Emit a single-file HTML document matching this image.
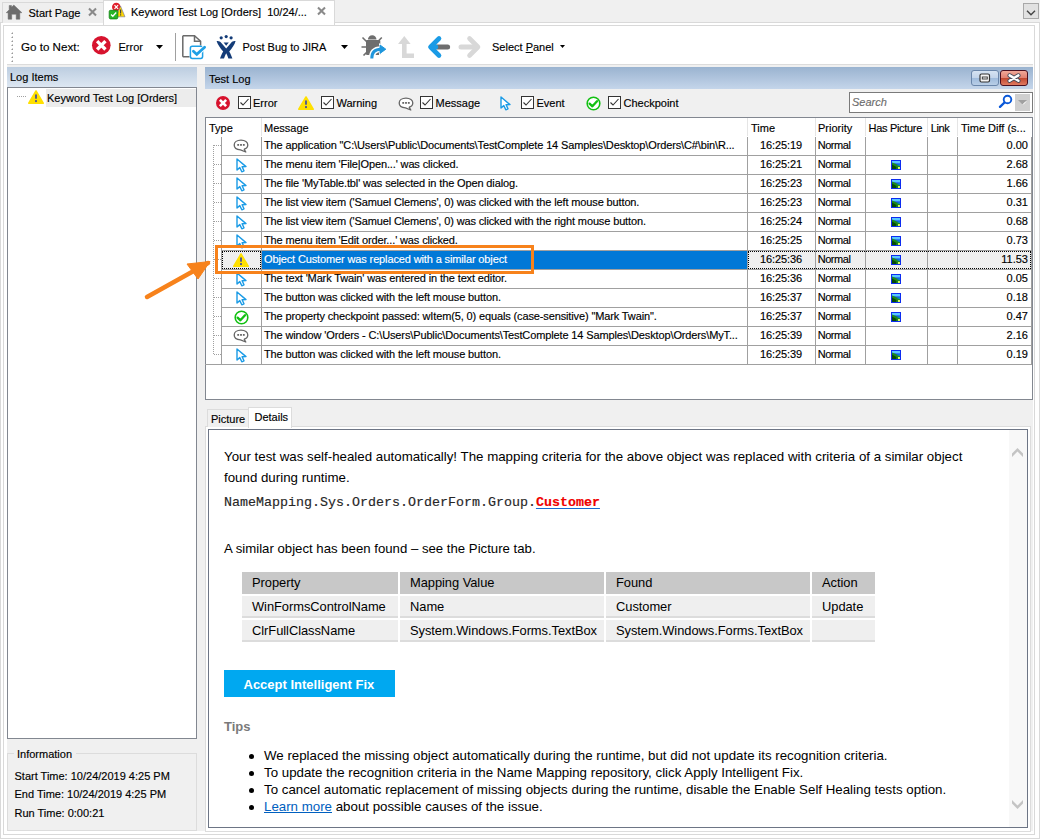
<!DOCTYPE html>
<html><head><meta charset="utf-8">
<style>
*{margin:0;padding:0;box-sizing:border-box}
html,body{width:1040px;height:839px;overflow:hidden;background:#f0f0f0;font-family:"Liberation Sans",sans-serif;font-size:11px;color:#000}
.a{position:absolute}
.t{position:absolute;white-space:nowrap;line-height:1;-webkit-text-stroke:0.15px currentColor}
.d{-webkit-text-stroke:0}
svg{position:absolute;overflow:visible}
.m{font-family:"Liberation Mono",monospace}
</style></head><body>
<div class="a" style="left:0px;top:22px;width:1040px;height:817px;background:#fff;border:1px solid #d9d9d9"></div>
<div class="a" style="left:3px;top:25px;width:1032px;height:810px;background:#fff;border:1px solid #d9d9d9"></div>
<div class="a" style="left:7px;top:65px;width:1026px;height:766px;background:#f0f0f0"></div>
<div class="a" style="left:7px;top:64px;width:1026px;height:1px;background:#dcdcdc"></div>
<div class="a" style="left:2px;top:2px;width:102px;height:21px;background:#efefef;border:1px solid #d9d9d9;border-bottom:none"></div>
<svg style="left:0px;top:0px" width="24" height="24" viewBox="0 0 24 24"><path d="M13.8,5 L21.9,12.7 L19.8,12.7 L19.8,19.2 L16.2,19.2 L16.2,14.2 L11.7,14.2 L11.7,19.2 L8.1,19.2 L8.1,12.7 L6.2,12.7 L9.2,9.8 L9.2,5.5 L11.5,5.5 L11.5,7.3 Z" fill="#6d6d6d" stroke="#6d6d6d" stroke-width="0.5" stroke-linejoin="round"/></svg>
<div class="t" style="left:28.5px;top:7.69px;font-size:11px;">Start Page</div>
<svg style="left:88px;top:8px" width="9" height="8" viewBox="0 0 9 8"><path d="M1,0.5 L8,7.5 M8,0.5 L1,7.5" stroke="#8a8a8a" stroke-width="2.1"/></svg>
<div class="a" style="left:103px;top:0px;width:232px;height:25px;background:#fff;border:1px solid #d9d9d9;border-bottom:none"></div>
<svg style="left:108px;top:2px" width="18" height="18" viewBox="0 0 18 18"><circle cx="8.3" cy="5" r="4.3" fill="#e0202c"/><path d="M6.5,3.2 L10.1,6.8 M10.1,3.2 L6.5,6.8" stroke="#fff" stroke-width="1.2"/><path d="M12.5,4 L17,14.8 L8,14.8 Z" fill="#ffd800" stroke="#7070a0" stroke-width="0.6" stroke-linejoin="round"/><rect x="12" y="7.5" width="1.2" height="4" fill="#444"/><rect x="12" y="12.3" width="1.2" height="1.2" fill="#444"/><rect x="1.2" y="8.3" width="8.6" height="8.6" rx="1.3" fill="#28b428" stroke="#108010" stroke-width="0.8"/><path d="M3,12.5 L4.8,14.3 L8.2,10.5" fill="none" stroke="#fff" stroke-width="1.3"/></svg>
<div class="t" style="left:131px;top:7.19px;font-size:11px;">Keyword Test Log [Orders]&nbsp; 10/24/...</div>
<svg style="left:317px;top:7px" width="9" height="8" viewBox="0 0 9 8"><path d="M1,0.5 L8,7.5 M8,0.5 L1,7.5" stroke="#8a8a8a" stroke-width="2.1"/></svg>
<div class="a" style="left:1023px;top:3px;width:16px;height:16px;background:#e1e1e1;border:1px solid #a8a8a8"></div>
<svg style="left:1026px;top:10px" width="10" height="6" viewBox="0 0 10 6"><path d="M1,0.8 L5,4.8 L9,0.8" fill="none" stroke="#444" stroke-width="1.4"/></svg>
<svg style="left:11px;top:32px" width="3" height="30" viewBox="0 0 3 30"><path d="M0,2 L2,0 L2,2 Z" fill="#9a9a9a"/><rect x="0" y="1" width="1" height="1" fill="#c8c8c8"/><path d="M0,6 L2,4 L2,6 Z" fill="#9a9a9a"/><rect x="0" y="5" width="1" height="1" fill="#c8c8c8"/><path d="M0,10 L2,8 L2,10 Z" fill="#9a9a9a"/><rect x="0" y="9" width="1" height="1" fill="#c8c8c8"/><path d="M0,14 L2,12 L2,14 Z" fill="#9a9a9a"/><rect x="0" y="13" width="1" height="1" fill="#c8c8c8"/><path d="M0,18 L2,16 L2,18 Z" fill="#9a9a9a"/><rect x="0" y="17" width="1" height="1" fill="#c8c8c8"/><path d="M0,22 L2,20 L2,22 Z" fill="#9a9a9a"/><rect x="0" y="21" width="1" height="1" fill="#c8c8c8"/><path d="M0,26 L2,24 L2,26 Z" fill="#9a9a9a"/><rect x="0" y="25" width="1" height="1" fill="#c8c8c8"/><path d="M0,30 L2,28 L2,30 Z" fill="#9a9a9a"/><rect x="0" y="29" width="1" height="1" fill="#c8c8c8"/></svg>
<div class="t" style="left:21px;top:41.18px;font-size:11.6px;">Go to Next:</div>
<svg style="left:90.7px;top:35.2px" width="20.6" height="20.6" viewBox="0 0 20.6 20.6"><circle cx="10.3" cy="10.3" r="9.3" fill="#d7132e"/><path d="M7.324,7.324L13.276000000000002,13.276000000000002M13.276000000000002,7.324L7.324,13.276000000000002" stroke="#fff" stroke-width="3.3480000000000003" stroke-linecap="square"/></svg>
<div class="t" style="left:118.5px;top:41.69px;font-size:11px;">Error</div>
<svg style="left:156px;top:45px" width="7" height="4" viewBox="0 0 7 4"><path d="M0,0 L7,0 L3.5,4 Z" fill="#000"/></svg>
<div class="a" style="left:175px;top:33px;width:1px;height:28px;background:#a0a0a0"></div>
<svg style="left:182px;top:35px" width="24" height="24" viewBox="0 0 24 24"><path d="M0.8,0.8 L12.5,0.8 L18.6,6.3 L18.6,10.5 M7.5,21.7 L0.8,21.7 Z M0.8,0.8 L0.8,21.7" fill="none" stroke="#6a6a6a" stroke-width="1.5"/><path d="M12.5,0.8 L12.5,6.3 L18.6,6.3" fill="none" stroke="#6a6a6a" stroke-width="1.5"/><rect x="8.4" y="11.2" width="12.2" height="12.2" rx="1.8" fill="#fff" stroke="#1ea0e6" stroke-width="1.5"/><path d="M11.4,16.2 L14.8,19.4 L22.6,12.3" fill="none" stroke="#fff" stroke-width="4.5"/><path d="M11.4,16.2 L14.8,19.4 L22.6,12.3" fill="none" stroke="#1ea0e6" stroke-width="2.8" stroke-linecap="round"/></svg>
<svg style="left:216px;top:35px" width="20" height="24" viewBox="0 0 20 24"><circle cx="5.2" cy="2.8" r="1.6" fill="#143c78"/><circle cx="10.2" cy="1.6" r="1.6" fill="#143c78"/><circle cx="15.1" cy="2.8" r="1.6" fill="#143c78"/><path d="M0.6,6 C2,6 3.5,6.2 4.5,7 L10.2,13.5 L15.8,7 C16.8,6.2 18.2,6 19.6,6 C18.7,9.5 16.2,13 13.2,16.5 C14.7,19 15.7,21.5 16.4,23.6 L12.4,23.6 C11.8,21.5 11,19.8 10.2,18.3 C9.4,19.8 8.6,21.5 8,23.6 L4,23.6 C4.7,21.5 5.7,19 7.2,16.5 C4.2,13 1.7,9.5 0.6,6 Z" fill="#143c78"/><path d="M7.6,7.6 L12.8,7.6 L10.2,10.8 Z" fill="#143c78"/></svg>
<div class="t" style="left:242.5px;top:41.69px;font-size:11px;">Post Bug to JIRA</div>
<svg style="left:341px;top:45px" width="7" height="4" viewBox="0 0 7 4"><path d="M0,0 L7,0 L3.5,4 Z" fill="#000"/></svg>
<svg style="left:361px;top:34px" width="27" height="26" viewBox="0 0 27 26"><path d="M6.9,5.6 A4.3,4.3 0 0 1 15.5,5.6 Z" fill="#6e6e6e"/><rect x="5" y="6" width="14.3" height="15" rx="1" fill="#6e6e6e"/><path d="M1.5,3.5 L5.5,7.5 M20.8,3.5 L16.8,7.5 M0.5,13 L5,13 M2.5,21.5 L6,18" stroke="#6e6e6e" stroke-width="1.6"/><path d="M10.8,24.5 C10.8,18.5 13.5,15.2 20,15.2" fill="none" stroke="#fff" stroke-width="6"/><path d="M18,9 L26,15.2 L18,21.5 Z" fill="#fff"/><path d="M10.8,24.5 C10.8,18.5 13.5,15.2 20,15.2" fill="none" stroke="#1e96dc" stroke-width="3"/><path d="M19,11 L24.8,15.2 L19,19.4 Z" fill="#1e96dc" stroke="#1e96dc" stroke-width="1" stroke-linejoin="round"/></svg>
<svg style="left:397px;top:35px" width="20" height="24" viewBox="0 0 20 24"><path d="M1,9 L7.3,1 L13.6,9 Z" fill="#d8d8d8"/><path d="M7.3,7 L7.3,20.8 L17,20.8" fill="none" stroke="#d8d8d8" stroke-width="4.6"/></svg>
<svg style="left:426px;top:35px" width="25" height="24" viewBox="0 0 25 24"><path d="M9,12 L21.6,12" stroke="#6e6e6e" stroke-width="5" stroke-linecap="round"/><path d="M13,3.5 L4.5,12 L13,20.5" fill="none" stroke="#1a9be6" stroke-width="4.6" stroke-linecap="round" stroke-linejoin="round"/><path d="M5,12 L10,12" stroke="#1a9be6" stroke-width="4.6" stroke-linecap="round"/></svg>
<svg style="left:458px;top:35px" width="25" height="24" viewBox="0 0 25 24"><path d="M11.5,3.5 L20,12 L11.5,20.5" fill="none" stroke="#d8d8d8" stroke-width="4.6" stroke-linecap="round" stroke-linejoin="round"/><path d="M3,12 L18,12" stroke="#d8d8d8" stroke-width="5" stroke-linecap="round"/></svg>
<div class="t" style="left:492px;top:41.69px;font-size:11px;">Select <u>P</u>anel</div>
<svg style="left:560px;top:45px" width="5" height="3" viewBox="0 0 5 3"><path d="M0,0 L5,0 L2.5,3 Z" fill="#000"/></svg>
<div class="a" style="left:7px;top:67px;width:190px;height:20px;background:linear-gradient(#bccde0,#dde7f2)"></div>
<div class="t" style="left:10px;top:72.19px;font-size:11px;">Log Items</div>
<div class="a" style="left:7px;top:87px;width:190px;height:652px;background:#fff;border:1px solid #828790"></div>
<svg style="left:17px;top:96px" width="10" height="1" viewBox="0 0 10 1"><rect x="0" y="0" width="1" height="1" fill="#a0a0a0"/><rect x="2" y="0" width="1" height="1" fill="#a0a0a0"/><rect x="4" y="0" width="1" height="1" fill="#a0a0a0"/><rect x="6" y="0" width="1" height="1" fill="#a0a0a0"/><rect x="8" y="0" width="1" height="1" fill="#a0a0a0"/></svg>
<svg style="left:28px;top:90px" width="16" height="14" viewBox="0 0 16 14"><path d="M8.0,1 L15.2,13.2 L0.8,13.2 Z" fill="#ffe000" stroke="#ffe000" stroke-width="1.6" stroke-linejoin="round"/><rect x="7.0" y="4.48" width="2" height="4.2" fill="#5a5f8a"/><rect x="7.0" y="10.08" width="2" height="2" fill="#5a5f8a"/></svg>
<div class="a" style="left:46px;top:89px;width:150px;height:18px;background:#ececec"></div>
<div class="t" style="left:47px;top:92.69px;font-size:11px;">Keyword Test Log [Orders]</div>
<div class="a" style="left:7px;top:753px;width:190px;height:78px;border:1px solid #dcdcdc;border-radius:0"></div>
<div class="a" style="left:14px;top:748px;width:62px;height:12px;background:#f0f0f0"></div>
<div class="t" style="left:17px;top:748.69px;font-size:11px;">Information</div>
<div class="t" style="left:14.5px;top:770.69px;font-size:11px;">Start Time: 10/24/2019 4:25 PM</div>
<div class="t" style="left:14.5px;top:789.19px;font-size:11px;">End Time: 10/24/2019 4:25 PM</div>
<div class="t" style="left:14.5px;top:807.69px;font-size:11px;">Run Time: 0:00:21</div>
<div class="a" style="left:205px;top:67px;width:828px;height:22px;background:linear-gradient(#9ab3d0,#c4d5ea)"></div>
<div class="t" style="left:209px;top:74.19px;font-size:11px;">Test Log</div>
<div class="a" style="left:971px;top:70px;width:28px;height:16px;border:1px solid #6a86aa;border-radius:3px;background:linear-gradient(#d6e3f2 0%,#c2d4ea 50%,#9fbbdc 51%,#b9cee6 100%)"></div>
<svg style="left:979px;top:73px" width="12" height="10" viewBox="0 0 12 10"><rect x="1" y="1" width="9.5" height="8" rx="1.5" fill="#f4f4f4" stroke="#333" stroke-width="1.2"/><rect x="3.3" y="4" width="5" height="2" fill="none" stroke="#333" stroke-width="0.9"/></svg>
<div class="a" style="left:1000px;top:70px;width:28px;height:16px;border:1px solid #4a1020;border-radius:3px;background:linear-gradient(#f0a898 0%,#e08070 50%,#c04830 51%,#e07a60 100%)"></div>
<svg style="left:1006px;top:72px" width="16" height="12" viewBox="0 0 16 12"><path d="M3.6,3.4 L12.4,8.8 M12.4,3.4 L3.6,8.8" stroke="#404858" stroke-width="4.2" stroke-linecap="round"/><path d="M3.6,3.4 L12.4,8.8 M12.4,3.4 L3.6,8.8" stroke="#fff" stroke-width="2.5" stroke-linecap="round"/></svg>
<svg style="left:215px;top:95px" width="16" height="16" viewBox="0 0 16 16"><circle cx="8" cy="8" r="7" fill="#d7132e"/><path d="M5.76,5.76L10.24,10.24M10.24,5.76L5.76,10.24" stroke="#fff" stroke-width="2.52" stroke-linecap="square"/></svg>
<svg style="left:238px;top:96px" width="13" height="13" viewBox="0 0 13 13"><rect x="0.5" y="0.5" width="12" height="12" fill="#fff" stroke="#333" stroke-width="1"/><path d="M2.5,6.5 L5,9 L10.5,3" fill="none" stroke="#333" stroke-width="1.1"/></svg>
<div class="t" style="left:253px;top:98.19px;font-size:11px;">Error</div>
<svg style="left:298px;top:96px" width="16" height="14" viewBox="0 0 16 14"><path d="M8.0,1 L15.2,13.2 L0.8,13.2 Z" fill="#ffe000" stroke="#ffe000" stroke-width="1.6" stroke-linejoin="round"/><rect x="7.0" y="4.48" width="2" height="4.2" fill="#5a5f8a"/><rect x="7.0" y="10.08" width="2" height="2" fill="#5a5f8a"/></svg>
<svg style="left:321px;top:96px" width="13" height="13" viewBox="0 0 13 13"><rect x="0.5" y="0.5" width="12" height="12" fill="#fff" stroke="#333" stroke-width="1"/><path d="M2.5,6.5 L5,9 L10.5,3" fill="none" stroke="#333" stroke-width="1.1"/></svg>
<div class="t" style="left:336.5px;top:98.19px;font-size:11px;">Warning</div>
<svg style="left:397.5px;top:96.5px" width="16" height="14" viewBox="0 0 16 14"><path d="M8,1.2 C3.9,1.2 1.2,3.3 1.2,6 C1.2,8.7 3.9,10.6 7.5,10.8 L12.8,13 L11.2,10.2 C13.5,9.4 14.8,7.8 14.8,6 C14.8,3.3 12.1,1.2 8,1.2 Z" fill="#fff" stroke="#666" stroke-width="1.3" stroke-linejoin="round"/><rect x="4.3" y="5" width="1.8" height="1.8" fill="#666"/><rect x="7.1" y="5" width="1.8" height="1.8" fill="#666"/><rect x="9.9" y="5" width="1.8" height="1.8" fill="#666"/></svg>
<svg style="left:420px;top:96px" width="13" height="13" viewBox="0 0 13 13"><rect x="0.5" y="0.5" width="12" height="12" fill="#fff" stroke="#333" stroke-width="1"/><path d="M2.5,6.5 L5,9 L10.5,3" fill="none" stroke="#333" stroke-width="1.1"/></svg>
<div class="t" style="left:435.5px;top:98.19px;font-size:11px;">Message</div>
<svg style="left:500px;top:95.5px" width="12" height="15" viewBox="0 0 12 15"><path d="M1,1 L1,12 L3.8,9.6 L5.8,13.8 L8,12.8 L6.1,8.7 L10,8.6 Z" fill="#fff" stroke="#1a9be6" stroke-width="1.4" stroke-linejoin="round"/></svg>
<svg style="left:521px;top:96px" width="13" height="13" viewBox="0 0 13 13"><rect x="0.5" y="0.5" width="12" height="12" fill="#fff" stroke="#333" stroke-width="1"/><path d="M2.5,6.5 L5,9 L10.5,3" fill="none" stroke="#333" stroke-width="1.1"/></svg>
<div class="t" style="left:536.5px;top:98.19px;font-size:11px;">Event</div>
<svg style="left:585.5px;top:95.5px" width="15" height="15" viewBox="0 0 15 15"><circle cx="7.5" cy="7.5" r="6.3" fill="#fff" stroke="#12c012" stroke-width="1.6"/><path d="M3.6,7.6 L6.4,10.3 L11,5.2" fill="none" stroke="#12c012" stroke-width="2.3" stroke-linejoin="round" stroke-linecap="round"/></svg>
<svg style="left:608px;top:96px" width="13" height="13" viewBox="0 0 13 13"><rect x="0.5" y="0.5" width="12" height="12" fill="#fff" stroke="#333" stroke-width="1"/><path d="M2.5,6.5 L5,9 L10.5,3" fill="none" stroke="#333" stroke-width="1.1"/></svg>
<div class="t" style="left:623.5px;top:98.19px;font-size:11px;">Checkpoint</div>
<div class="a" style="left:849px;top:92px;width:184px;height:21px;background:#fff;border:1px solid #7a7a7a"></div>
<div class="t" style="left:852px;top:97.19px;font-size:11px;color:#6d6d6d;font-style:italic">Search</div>
<svg style="left:998px;top:94px" width="15" height="14" viewBox="0 0 15 14"><circle cx="9.5" cy="5.5" r="3.8" fill="none" stroke="#0a58d8" stroke-width="1.9"/><path d="M6.5,8.5 L2,12.8" stroke="#0a58d8" stroke-width="2.4" stroke-linecap="round"/></svg>
<div class="a" style="left:1015px;top:94px;width:15px;height:17px;background:#cfcfcf"></div>
<svg style="left:1018px;top:100px" width="9" height="5" viewBox="0 0 9 5"><path d="M0,0 L9,0 L4.5,4.5Z" fill="#a0a0a0"/><path d="M5,4.5 L8,1.5" stroke="#fff" stroke-width="1"/></svg>
<div class="a" style="left:205px;top:117px;width:828px;height:283px;background:#fff;border:1px solid #828790"></div>
<div class="a" style="left:261px;top:118px;width:1px;height:18px;background:#e5e5e5"></div>
<div class="a" style="left:747px;top:118px;width:1px;height:18px;background:#e5e5e5"></div>
<div class="a" style="left:815px;top:118px;width:1px;height:18px;background:#e5e5e5"></div>
<div class="a" style="left:865px;top:118px;width:1px;height:18px;background:#e5e5e5"></div>
<div class="a" style="left:927px;top:118px;width:1px;height:18px;background:#e5e5e5"></div>
<div class="a" style="left:957px;top:118px;width:1px;height:18px;background:#e5e5e5"></div>
<div class="t" style="left:209px;top:122.69px;font-size:11px;">Type</div>
<div class="t" style="left:264px;top:122.69px;font-size:11px;">Message</div>
<div class="t" style="left:751px;top:122.69px;font-size:11px;">Time</div>
<div class="t" style="left:818px;top:122.69px;font-size:11px;">Priority</div>
<div class="t" style="left:868.5px;top:122.69px;font-size:11px;letter-spacing:-0.3px">Has Picture</div>
<div class="t" style="left:930.8px;top:122.69px;font-size:11px;letter-spacing:-0.4px">Link</div>
<div class="t" style="left:961px;top:122.69px;font-size:11px;">Time Diff (s...</div>
<div class="a" style="left:222px;top:155px;width:809px;height:1px;background:#a0a0a0"></div>
<svg style="left:213px;top:145px" width="8" height="1" viewBox="0 0 8 1"><rect x="1" y="0" width="1" height="1" fill="#a0a0a0"/><rect x="3" y="0" width="1" height="1" fill="#a0a0a0"/><rect x="5" y="0" width="1" height="1" fill="#a0a0a0"/><rect x="7" y="0" width="1" height="1" fill="#a0a0a0"/></svg>
<svg style="left:233px;top:139px" width="16" height="14" viewBox="0 0 16 14"><path d="M8,1.2 C3.9,1.2 1.2,3.3 1.2,6 C1.2,8.7 3.9,10.6 7.5,10.8 L12.8,13 L11.2,10.2 C13.5,9.4 14.8,7.8 14.8,6 C14.8,3.3 12.1,1.2 8,1.2 Z" fill="#fff" stroke="#666" stroke-width="1.3" stroke-linejoin="round"/><rect x="4.3" y="5" width="1.8" height="1.8" fill="#666"/><rect x="7.1" y="5" width="1.8" height="1.8" fill="#666"/><rect x="9.9" y="5" width="1.8" height="1.8" fill="#666"/></svg>
<div class="t" style="left:264px;top:139.69px;font-size:11px;letter-spacing:-0.13px">The application "C:\Users\Public\Documents\TestComplete 14 Samples\Desktop\Orders\C#\bin\R...</div>
<div class="t" style="left:760px;top:139.69px;font-size:11px;letter-spacing:-0.1px">16:25:19</div>
<div class="t" style="left:817.7px;top:139.69px;font-size:11px;letter-spacing:-0.45px">Normal</div>
<div class="t" style="left:958px;width:70px;text-align:right;top:139.69px">0.00</div>
<div class="a" style="left:222px;top:174px;width:809px;height:1px;background:#a0a0a0"></div>
<svg style="left:213px;top:164px" width="8" height="1" viewBox="0 0 8 1"><rect x="1" y="0" width="1" height="1" fill="#a0a0a0"/><rect x="3" y="0" width="1" height="1" fill="#a0a0a0"/><rect x="5" y="0" width="1" height="1" fill="#a0a0a0"/><rect x="7" y="0" width="1" height="1" fill="#a0a0a0"/></svg>
<svg style="left:236px;top:157.5px" width="12" height="15" viewBox="0 0 12 15"><path d="M1,1 L1,12 L3.8,9.6 L5.8,13.8 L8,12.8 L6.1,8.7 L10,8.6 Z" fill="#fff" stroke="#1a9be6" stroke-width="1.4" stroke-linejoin="round"/></svg>
<div class="t" style="left:264px;top:158.69px;font-size:11px;letter-spacing:-0.13px">The menu item 'File|Open...' was clicked.</div>
<div class="t" style="left:760px;top:158.69px;font-size:11px;letter-spacing:-0.1px">16:25:21</div>
<div class="t" style="left:817.7px;top:158.69px;font-size:11px;letter-spacing:-0.45px">Normal</div>
<svg style="left:891px;top:160px" width="10" height="10" viewBox="0 0 10 10"><rect x="0" y="0" width="10" height="10" fill="#0c2cf0"/><rect x="1" y="1" width="8" height="2.5" fill="#58c8ff"/><path d="M1,2.5 L9,5.5 L9,9 L1,9 Z" fill="#1c8a1c"/><path d="M9,4 L9,6.2 L5,4.8 Z" fill="#0a80e0"/><path d="M1,4.5 L5.5,7 L5,9 L1,9Z" fill="#064a06"/><rect x="7" y="7" width="2" height="2" fill="#d8f868"/></svg>
<div class="t" style="left:958px;width:70px;text-align:right;top:158.69px">2.68</div>
<div class="a" style="left:222px;top:193px;width:809px;height:1px;background:#a0a0a0"></div>
<svg style="left:213px;top:183px" width="8" height="1" viewBox="0 0 8 1"><rect x="1" y="0" width="1" height="1" fill="#a0a0a0"/><rect x="3" y="0" width="1" height="1" fill="#a0a0a0"/><rect x="5" y="0" width="1" height="1" fill="#a0a0a0"/><rect x="7" y="0" width="1" height="1" fill="#a0a0a0"/></svg>
<svg style="left:236px;top:176.5px" width="12" height="15" viewBox="0 0 12 15"><path d="M1,1 L1,12 L3.8,9.6 L5.8,13.8 L8,12.8 L6.1,8.7 L10,8.6 Z" fill="#fff" stroke="#1a9be6" stroke-width="1.4" stroke-linejoin="round"/></svg>
<div class="t" style="left:264px;top:177.69px;font-size:11px;letter-spacing:-0.13px">The file 'MyTable.tbl' was selected in the Open dialog.</div>
<div class="t" style="left:760px;top:177.69px;font-size:11px;letter-spacing:-0.1px">16:25:23</div>
<div class="t" style="left:817.7px;top:177.69px;font-size:11px;letter-spacing:-0.45px">Normal</div>
<svg style="left:891px;top:179px" width="10" height="10" viewBox="0 0 10 10"><rect x="0" y="0" width="10" height="10" fill="#0c2cf0"/><rect x="1" y="1" width="8" height="2.5" fill="#58c8ff"/><path d="M1,2.5 L9,5.5 L9,9 L1,9 Z" fill="#1c8a1c"/><path d="M9,4 L9,6.2 L5,4.8 Z" fill="#0a80e0"/><path d="M1,4.5 L5.5,7 L5,9 L1,9Z" fill="#064a06"/><rect x="7" y="7" width="2" height="2" fill="#d8f868"/></svg>
<div class="t" style="left:958px;width:70px;text-align:right;top:177.69px">1.66</div>
<div class="a" style="left:222px;top:212px;width:809px;height:1px;background:#a0a0a0"></div>
<svg style="left:213px;top:202px" width="8" height="1" viewBox="0 0 8 1"><rect x="1" y="0" width="1" height="1" fill="#a0a0a0"/><rect x="3" y="0" width="1" height="1" fill="#a0a0a0"/><rect x="5" y="0" width="1" height="1" fill="#a0a0a0"/><rect x="7" y="0" width="1" height="1" fill="#a0a0a0"/></svg>
<svg style="left:236px;top:195.5px" width="12" height="15" viewBox="0 0 12 15"><path d="M1,1 L1,12 L3.8,9.6 L5.8,13.8 L8,12.8 L6.1,8.7 L10,8.6 Z" fill="#fff" stroke="#1a9be6" stroke-width="1.4" stroke-linejoin="round"/></svg>
<div class="t" style="left:264px;top:196.69px;font-size:11px;letter-spacing:-0.13px">The list view item ('Samuel Clemens', 0) was clicked with the left mouse button.</div>
<div class="t" style="left:760px;top:196.69px;font-size:11px;letter-spacing:-0.1px">16:25:23</div>
<div class="t" style="left:817.7px;top:196.69px;font-size:11px;letter-spacing:-0.45px">Normal</div>
<svg style="left:891px;top:198px" width="10" height="10" viewBox="0 0 10 10"><rect x="0" y="0" width="10" height="10" fill="#0c2cf0"/><rect x="1" y="1" width="8" height="2.5" fill="#58c8ff"/><path d="M1,2.5 L9,5.5 L9,9 L1,9 Z" fill="#1c8a1c"/><path d="M9,4 L9,6.2 L5,4.8 Z" fill="#0a80e0"/><path d="M1,4.5 L5.5,7 L5,9 L1,9Z" fill="#064a06"/><rect x="7" y="7" width="2" height="2" fill="#d8f868"/></svg>
<div class="t" style="left:958px;width:70px;text-align:right;top:196.69px">0.31</div>
<div class="a" style="left:222px;top:231px;width:809px;height:1px;background:#a0a0a0"></div>
<svg style="left:213px;top:221px" width="8" height="1" viewBox="0 0 8 1"><rect x="1" y="0" width="1" height="1" fill="#a0a0a0"/><rect x="3" y="0" width="1" height="1" fill="#a0a0a0"/><rect x="5" y="0" width="1" height="1" fill="#a0a0a0"/><rect x="7" y="0" width="1" height="1" fill="#a0a0a0"/></svg>
<svg style="left:236px;top:214.5px" width="12" height="15" viewBox="0 0 12 15"><path d="M1,1 L1,12 L3.8,9.6 L5.8,13.8 L8,12.8 L6.1,8.7 L10,8.6 Z" fill="#fff" stroke="#1a9be6" stroke-width="1.4" stroke-linejoin="round"/></svg>
<div class="t" style="left:264px;top:215.69px;font-size:11px;letter-spacing:-0.13px">The list view item ('Samuel Clemens', 0) was clicked with the right mouse button.</div>
<div class="t" style="left:760px;top:215.69px;font-size:11px;letter-spacing:-0.1px">16:25:24</div>
<div class="t" style="left:817.7px;top:215.69px;font-size:11px;letter-spacing:-0.45px">Normal</div>
<svg style="left:891px;top:217px" width="10" height="10" viewBox="0 0 10 10"><rect x="0" y="0" width="10" height="10" fill="#0c2cf0"/><rect x="1" y="1" width="8" height="2.5" fill="#58c8ff"/><path d="M1,2.5 L9,5.5 L9,9 L1,9 Z" fill="#1c8a1c"/><path d="M9,4 L9,6.2 L5,4.8 Z" fill="#0a80e0"/><path d="M1,4.5 L5.5,7 L5,9 L1,9Z" fill="#064a06"/><rect x="7" y="7" width="2" height="2" fill="#d8f868"/></svg>
<div class="t" style="left:958px;width:70px;text-align:right;top:215.69px">0.68</div>
<div class="a" style="left:222px;top:250px;width:809px;height:1px;background:#a0a0a0"></div>
<svg style="left:213px;top:240px" width="8" height="1" viewBox="0 0 8 1"><rect x="1" y="0" width="1" height="1" fill="#a0a0a0"/><rect x="3" y="0" width="1" height="1" fill="#a0a0a0"/><rect x="5" y="0" width="1" height="1" fill="#a0a0a0"/><rect x="7" y="0" width="1" height="1" fill="#a0a0a0"/></svg>
<svg style="left:236px;top:233.5px" width="12" height="15" viewBox="0 0 12 15"><path d="M1,1 L1,12 L3.8,9.6 L5.8,13.8 L8,12.8 L6.1,8.7 L10,8.6 Z" fill="#fff" stroke="#1a9be6" stroke-width="1.4" stroke-linejoin="round"/></svg>
<div class="t" style="left:264px;top:234.69px;font-size:11px;letter-spacing:-0.13px">The menu item 'Edit order...' was clicked.</div>
<div class="t" style="left:760px;top:234.69px;font-size:11px;letter-spacing:-0.1px">16:25:25</div>
<div class="t" style="left:817.7px;top:234.69px;font-size:11px;letter-spacing:-0.45px">Normal</div>
<svg style="left:891px;top:236px" width="10" height="10" viewBox="0 0 10 10"><rect x="0" y="0" width="10" height="10" fill="#0c2cf0"/><rect x="1" y="1" width="8" height="2.5" fill="#58c8ff"/><path d="M1,2.5 L9,5.5 L9,9 L1,9 Z" fill="#1c8a1c"/><path d="M9,4 L9,6.2 L5,4.8 Z" fill="#0a80e0"/><path d="M1,4.5 L5.5,7 L5,9 L1,9Z" fill="#064a06"/><rect x="7" y="7" width="2" height="2" fill="#d8f868"/></svg>
<div class="t" style="left:958px;width:70px;text-align:right;top:234.69px">0.73</div>
<div class="a" style="left:222px;top:251px;width:39px;height:18px;background:#efefef"></div>
<div class="a" style="left:222px;top:251px;width:39px;height:18px;border:1px dotted #000"></div>
<div class="a" style="left:262px;top:251px;width:485px;height:18px;background:#0078d7"></div>
<div class="a" style="left:748px;top:251px;width:283px;height:18px;background:#efefef"></div>
<div class="a" style="left:748px;top:251px;width:283px;height:18px;border:1px dotted #000"></div>
<div class="a" style="left:222px;top:269px;width:809px;height:1px;background:#a0a0a0"></div>
<svg style="left:213px;top:259px" width="8" height="1" viewBox="0 0 8 1"><rect x="1" y="0" width="1" height="1" fill="#a0a0a0"/><rect x="3" y="0" width="1" height="1" fill="#a0a0a0"/><rect x="5" y="0" width="1" height="1" fill="#a0a0a0"/><rect x="7" y="0" width="1" height="1" fill="#a0a0a0"/></svg>
<svg style="left:233px;top:253px" width="16" height="14" viewBox="0 0 16 14"><path d="M8.0,1 L15.2,13.2 L0.8,13.2 Z" fill="#ffe000" stroke="#ffe000" stroke-width="1.6" stroke-linejoin="round"/><rect x="7.0" y="4.48" width="2" height="4.2" fill="#5a5f8a"/><rect x="7.0" y="10.08" width="2" height="2" fill="#5a5f8a"/></svg>
<div class="t" style="left:264px;top:253.69px;font-size:11px;color:#fff;letter-spacing:-0.13px">Object Customer was replaced with a similar object</div>
<div class="t" style="left:760px;top:253.69px;font-size:11px;letter-spacing:-0.1px">16:25:36</div>
<div class="t" style="left:817.7px;top:253.69px;font-size:11px;letter-spacing:-0.45px">Normal</div>
<svg style="left:891px;top:255px" width="10" height="10" viewBox="0 0 10 10"><rect x="0" y="0" width="10" height="10" fill="#0c2cf0"/><rect x="1" y="1" width="8" height="2.5" fill="#58c8ff"/><path d="M1,2.5 L9,5.5 L9,9 L1,9 Z" fill="#1c8a1c"/><path d="M9,4 L9,6.2 L5,4.8 Z" fill="#0a80e0"/><path d="M1,4.5 L5.5,7 L5,9 L1,9Z" fill="#064a06"/><rect x="7" y="7" width="2" height="2" fill="#d8f868"/></svg>
<div class="t" style="left:958px;width:70px;text-align:right;top:253.69px">11.53</div>
<div class="a" style="left:222px;top:288px;width:809px;height:1px;background:#a0a0a0"></div>
<svg style="left:213px;top:278px" width="8" height="1" viewBox="0 0 8 1"><rect x="1" y="0" width="1" height="1" fill="#a0a0a0"/><rect x="3" y="0" width="1" height="1" fill="#a0a0a0"/><rect x="5" y="0" width="1" height="1" fill="#a0a0a0"/><rect x="7" y="0" width="1" height="1" fill="#a0a0a0"/></svg>
<svg style="left:236px;top:271.5px" width="12" height="15" viewBox="0 0 12 15"><path d="M1,1 L1,12 L3.8,9.6 L5.8,13.8 L8,12.8 L6.1,8.7 L10,8.6 Z" fill="#fff" stroke="#1a9be6" stroke-width="1.4" stroke-linejoin="round"/></svg>
<div class="t" style="left:264px;top:272.69px;font-size:11px;letter-spacing:-0.13px">The text 'Mark Twain' was entered in the text editor.</div>
<div class="t" style="left:760px;top:272.69px;font-size:11px;letter-spacing:-0.1px">16:25:36</div>
<div class="t" style="left:817.7px;top:272.69px;font-size:11px;letter-spacing:-0.45px">Normal</div>
<svg style="left:891px;top:274px" width="10" height="10" viewBox="0 0 10 10"><rect x="0" y="0" width="10" height="10" fill="#0c2cf0"/><rect x="1" y="1" width="8" height="2.5" fill="#58c8ff"/><path d="M1,2.5 L9,5.5 L9,9 L1,9 Z" fill="#1c8a1c"/><path d="M9,4 L9,6.2 L5,4.8 Z" fill="#0a80e0"/><path d="M1,4.5 L5.5,7 L5,9 L1,9Z" fill="#064a06"/><rect x="7" y="7" width="2" height="2" fill="#d8f868"/></svg>
<div class="t" style="left:958px;width:70px;text-align:right;top:272.69px">0.05</div>
<div class="a" style="left:222px;top:307px;width:809px;height:1px;background:#a0a0a0"></div>
<svg style="left:213px;top:297px" width="8" height="1" viewBox="0 0 8 1"><rect x="1" y="0" width="1" height="1" fill="#a0a0a0"/><rect x="3" y="0" width="1" height="1" fill="#a0a0a0"/><rect x="5" y="0" width="1" height="1" fill="#a0a0a0"/><rect x="7" y="0" width="1" height="1" fill="#a0a0a0"/></svg>
<svg style="left:236px;top:290.5px" width="12" height="15" viewBox="0 0 12 15"><path d="M1,1 L1,12 L3.8,9.6 L5.8,13.8 L8,12.8 L6.1,8.7 L10,8.6 Z" fill="#fff" stroke="#1a9be6" stroke-width="1.4" stroke-linejoin="round"/></svg>
<div class="t" style="left:264px;top:291.69px;font-size:11px;letter-spacing:-0.13px">The button was clicked with the left mouse button.</div>
<div class="t" style="left:760px;top:291.69px;font-size:11px;letter-spacing:-0.1px">16:25:37</div>
<div class="t" style="left:817.7px;top:291.69px;font-size:11px;letter-spacing:-0.45px">Normal</div>
<svg style="left:891px;top:293px" width="10" height="10" viewBox="0 0 10 10"><rect x="0" y="0" width="10" height="10" fill="#0c2cf0"/><rect x="1" y="1" width="8" height="2.5" fill="#58c8ff"/><path d="M1,2.5 L9,5.5 L9,9 L1,9 Z" fill="#1c8a1c"/><path d="M9,4 L9,6.2 L5,4.8 Z" fill="#0a80e0"/><path d="M1,4.5 L5.5,7 L5,9 L1,9Z" fill="#064a06"/><rect x="7" y="7" width="2" height="2" fill="#d8f868"/></svg>
<div class="t" style="left:958px;width:70px;text-align:right;top:291.69px">0.18</div>
<div class="a" style="left:222px;top:326px;width:809px;height:1px;background:#a0a0a0"></div>
<svg style="left:213px;top:316px" width="8" height="1" viewBox="0 0 8 1"><rect x="1" y="0" width="1" height="1" fill="#a0a0a0"/><rect x="3" y="0" width="1" height="1" fill="#a0a0a0"/><rect x="5" y="0" width="1" height="1" fill="#a0a0a0"/><rect x="7" y="0" width="1" height="1" fill="#a0a0a0"/></svg>
<svg style="left:234px;top:310px" width="15" height="15" viewBox="0 0 15 15"><circle cx="7.5" cy="7.5" r="6.3" fill="#fff" stroke="#12c012" stroke-width="1.6"/><path d="M3.6,7.6 L6.4,10.3 L11,5.2" fill="none" stroke="#12c012" stroke-width="2.3" stroke-linejoin="round" stroke-linecap="round"/></svg>
<div class="t" style="left:264px;top:310.69px;font-size:11px;letter-spacing:-0.13px">The property checkpoint passed: wItem(5, 0) equals (case-sensitive) "Mark Twain".</div>
<div class="t" style="left:760px;top:310.69px;font-size:11px;letter-spacing:-0.1px">16:25:37</div>
<div class="t" style="left:817.7px;top:310.69px;font-size:11px;letter-spacing:-0.45px">Normal</div>
<svg style="left:891px;top:312px" width="10" height="10" viewBox="0 0 10 10"><rect x="0" y="0" width="10" height="10" fill="#0c2cf0"/><rect x="1" y="1" width="8" height="2.5" fill="#58c8ff"/><path d="M1,2.5 L9,5.5 L9,9 L1,9 Z" fill="#1c8a1c"/><path d="M9,4 L9,6.2 L5,4.8 Z" fill="#0a80e0"/><path d="M1,4.5 L5.5,7 L5,9 L1,9Z" fill="#064a06"/><rect x="7" y="7" width="2" height="2" fill="#d8f868"/></svg>
<div class="t" style="left:958px;width:70px;text-align:right;top:310.69px">0.47</div>
<div class="a" style="left:222px;top:345px;width:809px;height:1px;background:#a0a0a0"></div>
<svg style="left:213px;top:335px" width="8" height="1" viewBox="0 0 8 1"><rect x="1" y="0" width="1" height="1" fill="#a0a0a0"/><rect x="3" y="0" width="1" height="1" fill="#a0a0a0"/><rect x="5" y="0" width="1" height="1" fill="#a0a0a0"/><rect x="7" y="0" width="1" height="1" fill="#a0a0a0"/></svg>
<svg style="left:233px;top:329px" width="16" height="14" viewBox="0 0 16 14"><path d="M8,1.2 C3.9,1.2 1.2,3.3 1.2,6 C1.2,8.7 3.9,10.6 7.5,10.8 L12.8,13 L11.2,10.2 C13.5,9.4 14.8,7.8 14.8,6 C14.8,3.3 12.1,1.2 8,1.2 Z" fill="#fff" stroke="#666" stroke-width="1.3" stroke-linejoin="round"/><rect x="4.3" y="5" width="1.8" height="1.8" fill="#666"/><rect x="7.1" y="5" width="1.8" height="1.8" fill="#666"/><rect x="9.9" y="5" width="1.8" height="1.8" fill="#666"/></svg>
<div class="t" style="left:264px;top:329.69px;font-size:11px;letter-spacing:-0.13px">The window 'Orders - C:\Users\Public\Documents\TestComplete 14 Samples\Desktop\Orders\MyT...</div>
<div class="t" style="left:760px;top:329.69px;font-size:11px;letter-spacing:-0.1px">16:25:39</div>
<div class="t" style="left:817.7px;top:329.69px;font-size:11px;letter-spacing:-0.45px">Normal</div>
<div class="t" style="left:958px;width:70px;text-align:right;top:329.69px">2.16</div>
<div class="a" style="left:222px;top:364px;width:809px;height:1px;background:#a0a0a0"></div>
<svg style="left:213px;top:354px" width="8" height="1" viewBox="0 0 8 1"><rect x="1" y="0" width="1" height="1" fill="#a0a0a0"/><rect x="3" y="0" width="1" height="1" fill="#a0a0a0"/><rect x="5" y="0" width="1" height="1" fill="#a0a0a0"/><rect x="7" y="0" width="1" height="1" fill="#a0a0a0"/></svg>
<svg style="left:236px;top:347.5px" width="12" height="15" viewBox="0 0 12 15"><path d="M1,1 L1,12 L3.8,9.6 L5.8,13.8 L8,12.8 L6.1,8.7 L10,8.6 Z" fill="#fff" stroke="#1a9be6" stroke-width="1.4" stroke-linejoin="round"/></svg>
<div class="t" style="left:264px;top:348.69px;font-size:11px;letter-spacing:-0.13px">The button was clicked with the left mouse button.</div>
<div class="t" style="left:760px;top:348.69px;font-size:11px;letter-spacing:-0.1px">16:25:39</div>
<div class="t" style="left:817.7px;top:348.69px;font-size:11px;letter-spacing:-0.45px">Normal</div>
<svg style="left:891px;top:350px" width="10" height="10" viewBox="0 0 10 10"><rect x="0" y="0" width="10" height="10" fill="#0c2cf0"/><rect x="1" y="1" width="8" height="2.5" fill="#58c8ff"/><path d="M1,2.5 L9,5.5 L9,9 L1,9 Z" fill="#1c8a1c"/><path d="M9,4 L9,6.2 L5,4.8 Z" fill="#0a80e0"/><path d="M1,4.5 L5.5,7 L5,9 L1,9Z" fill="#064a06"/><rect x="7" y="7" width="2" height="2" fill="#d8f868"/></svg>
<div class="t" style="left:958px;width:70px;text-align:right;top:348.69px">0.19</div>
<div class="a" style="left:221px;top:137px;width:1px;height:228px;background:#a0a0a0"></div>
<div class="a" style="left:261px;top:137px;width:1px;height:227px;background:#a0a0a0"></div>
<div class="a" style="left:747px;top:137px;width:1px;height:227px;background:#a0a0a0"></div>
<div class="a" style="left:815px;top:137px;width:1px;height:227px;background:#a0a0a0"></div>
<div class="a" style="left:865px;top:137px;width:1px;height:227px;background:#a0a0a0"></div>
<div class="a" style="left:927px;top:137px;width:1px;height:227px;background:#a0a0a0"></div>
<div class="a" style="left:957px;top:137px;width:1px;height:227px;background:#a0a0a0"></div>
<div class="a" style="left:1031px;top:137px;width:1px;height:227px;background:#a0a0a0"></div>
<div class="a" style="left:205px;top:364px;width:827px;height:1px;background:#a0a0a0"></div>
<svg style="left:213px;top:145px" width="1" height="209" viewBox="0 0 1 209"><rect x="0" y="0" width="1" height="1" fill="#a0a0a0"/><rect x="0" y="2" width="1" height="1" fill="#a0a0a0"/><rect x="0" y="4" width="1" height="1" fill="#a0a0a0"/><rect x="0" y="6" width="1" height="1" fill="#a0a0a0"/><rect x="0" y="8" width="1" height="1" fill="#a0a0a0"/><rect x="0" y="10" width="1" height="1" fill="#a0a0a0"/><rect x="0" y="12" width="1" height="1" fill="#a0a0a0"/><rect x="0" y="14" width="1" height="1" fill="#a0a0a0"/><rect x="0" y="16" width="1" height="1" fill="#a0a0a0"/><rect x="0" y="18" width="1" height="1" fill="#a0a0a0"/><rect x="0" y="20" width="1" height="1" fill="#a0a0a0"/><rect x="0" y="22" width="1" height="1" fill="#a0a0a0"/><rect x="0" y="24" width="1" height="1" fill="#a0a0a0"/><rect x="0" y="26" width="1" height="1" fill="#a0a0a0"/><rect x="0" y="28" width="1" height="1" fill="#a0a0a0"/><rect x="0" y="30" width="1" height="1" fill="#a0a0a0"/><rect x="0" y="32" width="1" height="1" fill="#a0a0a0"/><rect x="0" y="34" width="1" height="1" fill="#a0a0a0"/><rect x="0" y="36" width="1" height="1" fill="#a0a0a0"/><rect x="0" y="38" width="1" height="1" fill="#a0a0a0"/><rect x="0" y="40" width="1" height="1" fill="#a0a0a0"/><rect x="0" y="42" width="1" height="1" fill="#a0a0a0"/><rect x="0" y="44" width="1" height="1" fill="#a0a0a0"/><rect x="0" y="46" width="1" height="1" fill="#a0a0a0"/><rect x="0" y="48" width="1" height="1" fill="#a0a0a0"/><rect x="0" y="50" width="1" height="1" fill="#a0a0a0"/><rect x="0" y="52" width="1" height="1" fill="#a0a0a0"/><rect x="0" y="54" width="1" height="1" fill="#a0a0a0"/><rect x="0" y="56" width="1" height="1" fill="#a0a0a0"/><rect x="0" y="58" width="1" height="1" fill="#a0a0a0"/><rect x="0" y="60" width="1" height="1" fill="#a0a0a0"/><rect x="0" y="62" width="1" height="1" fill="#a0a0a0"/><rect x="0" y="64" width="1" height="1" fill="#a0a0a0"/><rect x="0" y="66" width="1" height="1" fill="#a0a0a0"/><rect x="0" y="68" width="1" height="1" fill="#a0a0a0"/><rect x="0" y="70" width="1" height="1" fill="#a0a0a0"/><rect x="0" y="72" width="1" height="1" fill="#a0a0a0"/><rect x="0" y="74" width="1" height="1" fill="#a0a0a0"/><rect x="0" y="76" width="1" height="1" fill="#a0a0a0"/><rect x="0" y="78" width="1" height="1" fill="#a0a0a0"/><rect x="0" y="80" width="1" height="1" fill="#a0a0a0"/><rect x="0" y="82" width="1" height="1" fill="#a0a0a0"/><rect x="0" y="84" width="1" height="1" fill="#a0a0a0"/><rect x="0" y="86" width="1" height="1" fill="#a0a0a0"/><rect x="0" y="88" width="1" height="1" fill="#a0a0a0"/><rect x="0" y="90" width="1" height="1" fill="#a0a0a0"/><rect x="0" y="92" width="1" height="1" fill="#a0a0a0"/><rect x="0" y="94" width="1" height="1" fill="#a0a0a0"/><rect x="0" y="96" width="1" height="1" fill="#a0a0a0"/><rect x="0" y="98" width="1" height="1" fill="#a0a0a0"/><rect x="0" y="100" width="1" height="1" fill="#a0a0a0"/><rect x="0" y="102" width="1" height="1" fill="#a0a0a0"/><rect x="0" y="104" width="1" height="1" fill="#a0a0a0"/><rect x="0" y="106" width="1" height="1" fill="#a0a0a0"/><rect x="0" y="108" width="1" height="1" fill="#a0a0a0"/><rect x="0" y="110" width="1" height="1" fill="#a0a0a0"/><rect x="0" y="112" width="1" height="1" fill="#a0a0a0"/><rect x="0" y="114" width="1" height="1" fill="#a0a0a0"/><rect x="0" y="116" width="1" height="1" fill="#a0a0a0"/><rect x="0" y="118" width="1" height="1" fill="#a0a0a0"/><rect x="0" y="120" width="1" height="1" fill="#a0a0a0"/><rect x="0" y="122" width="1" height="1" fill="#a0a0a0"/><rect x="0" y="124" width="1" height="1" fill="#a0a0a0"/><rect x="0" y="126" width="1" height="1" fill="#a0a0a0"/><rect x="0" y="128" width="1" height="1" fill="#a0a0a0"/><rect x="0" y="130" width="1" height="1" fill="#a0a0a0"/><rect x="0" y="132" width="1" height="1" fill="#a0a0a0"/><rect x="0" y="134" width="1" height="1" fill="#a0a0a0"/><rect x="0" y="136" width="1" height="1" fill="#a0a0a0"/><rect x="0" y="138" width="1" height="1" fill="#a0a0a0"/><rect x="0" y="140" width="1" height="1" fill="#a0a0a0"/><rect x="0" y="142" width="1" height="1" fill="#a0a0a0"/><rect x="0" y="144" width="1" height="1" fill="#a0a0a0"/><rect x="0" y="146" width="1" height="1" fill="#a0a0a0"/><rect x="0" y="148" width="1" height="1" fill="#a0a0a0"/><rect x="0" y="150" width="1" height="1" fill="#a0a0a0"/><rect x="0" y="152" width="1" height="1" fill="#a0a0a0"/><rect x="0" y="154" width="1" height="1" fill="#a0a0a0"/><rect x="0" y="156" width="1" height="1" fill="#a0a0a0"/><rect x="0" y="158" width="1" height="1" fill="#a0a0a0"/><rect x="0" y="160" width="1" height="1" fill="#a0a0a0"/><rect x="0" y="162" width="1" height="1" fill="#a0a0a0"/><rect x="0" y="164" width="1" height="1" fill="#a0a0a0"/><rect x="0" y="166" width="1" height="1" fill="#a0a0a0"/><rect x="0" y="168" width="1" height="1" fill="#a0a0a0"/><rect x="0" y="170" width="1" height="1" fill="#a0a0a0"/><rect x="0" y="172" width="1" height="1" fill="#a0a0a0"/><rect x="0" y="174" width="1" height="1" fill="#a0a0a0"/><rect x="0" y="176" width="1" height="1" fill="#a0a0a0"/><rect x="0" y="178" width="1" height="1" fill="#a0a0a0"/><rect x="0" y="180" width="1" height="1" fill="#a0a0a0"/><rect x="0" y="182" width="1" height="1" fill="#a0a0a0"/><rect x="0" y="184" width="1" height="1" fill="#a0a0a0"/><rect x="0" y="186" width="1" height="1" fill="#a0a0a0"/><rect x="0" y="188" width="1" height="1" fill="#a0a0a0"/><rect x="0" y="190" width="1" height="1" fill="#a0a0a0"/><rect x="0" y="192" width="1" height="1" fill="#a0a0a0"/><rect x="0" y="194" width="1" height="1" fill="#a0a0a0"/><rect x="0" y="196" width="1" height="1" fill="#a0a0a0"/><rect x="0" y="198" width="1" height="1" fill="#a0a0a0"/><rect x="0" y="200" width="1" height="1" fill="#a0a0a0"/><rect x="0" y="202" width="1" height="1" fill="#a0a0a0"/><rect x="0" y="204" width="1" height="1" fill="#a0a0a0"/><rect x="0" y="206" width="1" height="1" fill="#a0a0a0"/><rect x="0" y="208" width="1" height="1" fill="#a0a0a0"/></svg>
<div class="a" style="left:215px;top:245px;width:319px;height:29px;border:3.5px solid #f7821b"></div>
<svg style="left:140px;top:250px" width="80" height="55" viewBox="0 0 80 55"><path d="M7,47 L68,13" stroke="#f7821b" stroke-width="4.5" stroke-linecap="round"/><path d="M70,11.5 L47,14 L58,29 Z" fill="#f7821b" stroke="#f7821b" stroke-width="1" stroke-linejoin="round"/></svg>
<div class="a" style="left:205px;top:426px;width:826px;height:406px;border:1px solid #dcdcdc;background:#fff"></div>
<div class="a" style="left:208px;top:429px;width:820px;height:399px;background:#fff;border:1px solid #6d7585"></div>
<div class="a" style="left:1009px;top:430px;width:18px;height:397px;background:#f8f8f8"></div>
<svg style="left:1012px;top:448px" width="11" height="9" viewBox="0 0 11 9"><path d="M0,5.5 L5.5,0 L11,5.5 L11,9 L5.5,3.6 L0,9 Z" fill="#c4c4c4"/></svg>
<svg style="left:1012px;top:800px" width="11" height="9" viewBox="0 0 11 9"><path d="M0,0 L5.5,5.4 L11,0 L11,3.5 L5.5,9 L0,3.5 Z" fill="#c4c4c4"/></svg>
<div class="a" style="left:207px;top:409px;width:42px;height:18px;background:#f0f0f0;border:1px solid #dcdcdc;border-bottom:none"></div>
<div class="a" style="left:248px;top:407px;width:44px;height:21px;background:#fff;border:1px solid #dcdcdc;border-bottom:none"></div>
<div class="t" style="left:211px;top:413.99px;font-size:11px;">Picture</div>
<div class="t" style="left:254.5px;top:411.99px;font-size:11px;">Details</div>
<div class="t" style="left:224px;top:449.74px;font-size:13.3px;color:#000;-webkit-text-stroke:0;">Your test was self-healed automatically! The mapping criteria for the above object was replaced with criteria of a similar object</div>
<div class="t" style="left:224px;top:470.74px;font-size:13.3px;-webkit-text-stroke:0;">found during runtime.</div>
<div class="t m" style="color:#262626;left:224px;top:495.89px;font-size:13.33px">NameMapping.Sys.Orders.OrderForm.Group.<span style="color:#f00000;font-weight:bold;text-decoration:underline;text-decoration-color:#1a6ad0;text-underline-offset:2px">Customer</span></div>
<div class="t" style="left:224px;top:541.83px;font-size:13.2px;-webkit-text-stroke:0;">A similar object has been found – see the Picture tab.</div>
<div class="a" style="left:242px;top:572px;width:156px;height:22px;background:#c8c8c8;"></div>
<div class="t" style="left:252px;top:577.38px;font-size:12.9px;-webkit-text-stroke:0;letter-spacing:-0.05px">Property</div>
<div class="a" style="left:400px;top:572px;width:204px;height:22px;background:#c8c8c8;"></div>
<div class="t" style="left:410px;top:577.38px;font-size:12.9px;-webkit-text-stroke:0;letter-spacing:-0.05px">Mapping Value</div>
<div class="a" style="left:606px;top:572px;width:204px;height:22px;background:#c8c8c8;"></div>
<div class="t" style="left:616px;top:577.38px;font-size:12.9px;-webkit-text-stroke:0;letter-spacing:-0.05px">Found</div>
<div class="a" style="left:812px;top:572px;width:63px;height:22px;background:#c8c8c8;"></div>
<div class="t" style="left:822px;top:577.38px;font-size:12.9px;-webkit-text-stroke:0;letter-spacing:-0.05px">Action</div>
<div class="a" style="left:242px;top:596px;width:156px;height:22px;background:#efefef;border-bottom:2px solid #dcdcdc;"></div>
<div class="t" style="left:252px;top:601.38px;font-size:12.9px;-webkit-text-stroke:0;letter-spacing:-0.05px">WinFormsControlName</div>
<div class="a" style="left:400px;top:596px;width:204px;height:22px;background:#efefef;border-bottom:2px solid #dcdcdc;"></div>
<div class="t" style="left:410px;top:601.38px;font-size:12.9px;-webkit-text-stroke:0;letter-spacing:-0.05px">Name</div>
<div class="a" style="left:606px;top:596px;width:204px;height:22px;background:#efefef;border-bottom:2px solid #dcdcdc;"></div>
<div class="t" style="left:616px;top:601.38px;font-size:12.9px;-webkit-text-stroke:0;letter-spacing:-0.05px">Customer</div>
<div class="a" style="left:812px;top:596px;width:63px;height:22px;background:#efefef;border-bottom:2px solid #dcdcdc;"></div>
<div class="t" style="left:822px;top:601.38px;font-size:12.9px;-webkit-text-stroke:0;letter-spacing:-0.05px">Update</div>
<div class="a" style="left:242px;top:620px;width:156px;height:22px;background:#efefef;border-bottom:2px solid #dcdcdc;"></div>
<div class="t" style="left:252px;top:625.38px;font-size:12.9px;-webkit-text-stroke:0;letter-spacing:-0.05px">ClrFullClassName</div>
<div class="a" style="left:400px;top:620px;width:204px;height:22px;background:#efefef;border-bottom:2px solid #dcdcdc;"></div>
<div class="t" style="left:410px;top:625.38px;font-size:12.9px;-webkit-text-stroke:0;letter-spacing:-0.05px">System.Windows.Forms.TextBox</div>
<div class="a" style="left:606px;top:620px;width:204px;height:22px;background:#efefef;border-bottom:2px solid #dcdcdc;"></div>
<div class="t" style="left:616px;top:625.38px;font-size:12.9px;-webkit-text-stroke:0;letter-spacing:-0.05px">System.Windows.Forms.TextBox</div>
<div class="a" style="left:812px;top:620px;width:63px;height:22px;background:#efefef;border-bottom:2px solid #dcdcdc;"></div>
<div class="a" style="left:224px;top:670px;width:171px;height:27px;background:#00a8f0"></div>
<div class="t" style="left:243.5px;top:677.50px;font-size:13px;color:#fff;-webkit-text-stroke:0;font-weight:bold">Accept Intelligent Fix</div>
<div class="t" style="left:224px;top:720.00px;font-size:13px;color:#7a7a7a;-webkit-text-stroke:0;font-weight:bold">Tips</div>
<div class="a" style="left:249px;top:754.3px;width:5px;height:5px;border-radius:50%;background:#000"></div>
<div class="t" style="left:264px;top:749.04px;font-size:13.3px;-webkit-text-stroke:0;">We replaced the missing object automatically during the runtime, but did not update its recognition criteria.</div>
<div class="a" style="left:249px;top:771.3px;width:5px;height:5px;border-radius:50%;background:#000"></div>
<div class="t" style="left:264px;top:766.04px;font-size:13.3px;-webkit-text-stroke:0;">To update the recognition criteria in the Name Mapping repository, click Apply Intelligent Fix.</div>
<div class="a" style="left:249px;top:788.3px;width:5px;height:5px;border-radius:50%;background:#000"></div>
<div class="t" style="left:264px;top:783.04px;font-size:13.3px;-webkit-text-stroke:0;">To cancel automatic replacement of missing objects during the runtime, disable the Enable Self Healing tests option.</div>
<div class="a" style="left:249px;top:805.3px;width:5px;height:5px;border-radius:50%;background:#000"></div>
<div class="t" style="left:264px;top:800.04px;font-size:13.3px;-webkit-text-stroke:0;"><span style="color:#0060c0;text-decoration:underline">Learn more</span> about possible causes of the issue.</div>
</body></html>
